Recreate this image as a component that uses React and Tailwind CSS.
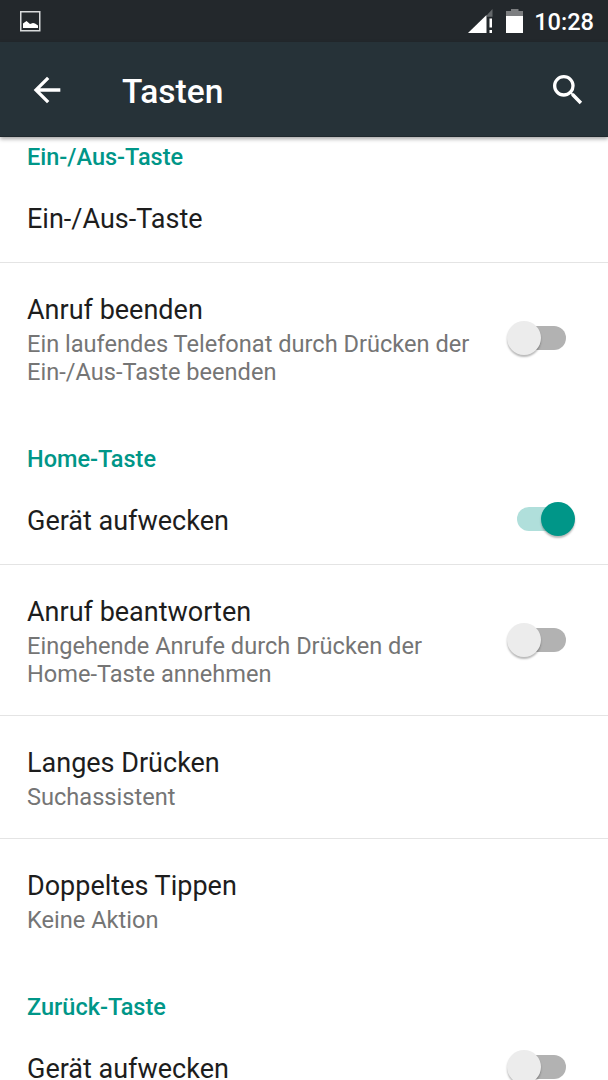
const sections = [
  {
    title: 'Ein-/Aus-Taste',
    items: [
      { title: 'Ein-/Aus-Taste' },
      {
        title: 'Anruf beenden',
        summary: ['Ein laufendes Telefonat durch Drücken der', 'Ein-/Aus-Taste beenden'],
        checked: false,
      },
    ],
  },
  {
    title: 'Home-Taste',
    items: [
      { title: 'Gerät aufwecken', checked: true },
      {
        title: 'Anruf beantworten',
        summary: ['Eingehende Anrufe durch Drücken der', 'Home-Taste annehmen'],
        checked: false,
      },
      { title: 'Langes Drücken', summary: ['Suchassistent'] },
      { title: 'Doppeltes Tippen', summary: ['Keine Aktion'] },
    ],
  },
  {
    title: 'Zurück-Taste',
    items: [{ title: 'Gerät aufwecken', checked: false }],
  },
];

function StatusBar() {
  return (
    <div className="flex h-[42px] shrink-0 items-center justify-between bg-[#23282c] pl-5 pr-[14px] text-white">
      <svg width="21" height="21" viewBox="0 0 21 21" className="shrink-0">
        <rect x="0.75" y="0.75" width="19" height="19" fill="none" stroke="#d8dadb" strokeWidth="1.5" />
        <path d="M3 17v-4.500l3.500-2.500 3.500 3 3-1 2 .500 3 2V17z" fill="#fff" />
      </svg>
      <div className="flex items-center">
        <svg width="26" height="26" viewBox="0 0 26 26" className="mr-[12px]">
          <path d="M19 7l5.500-6v7.700h-5.500z" fill="#64686b" />
          <path d="M0 25L18.500 7v18z" fill="#fff" />
          <path d="M21.500 10.500h2.500v9h-2.500zM21.500 22h2.500v3h-2.500z" fill="#fff" />
        </svg>
        <svg width="17" height="26" viewBox="0 0 17 26" className="mr-[11px]">
          <path d="M0 8V3h5V1h7.500v2H17v5z" fill="#7c7e80" />
          <path d="M0 8h17v17H0z" fill="#fff" />
        </svg>
        <span className="pt-px text-[23.6px] leading-[28px] font-medium">10:28</span>
      </div>
    </div>
  );
}

function Toolbar() {
  return (
    <header className="relative z-10 flex h-[95px] shrink-0 items-center border-b border-[#1f282d] bg-[#263238] text-white shadow-[0_2px_4px_rgba(0,0,0,0.35)]">
      <button className="ml-[27px] h-10 w-10 pt-px">
        <svg width="40" height="40" viewBox="0 0 24 24" fill="currentColor">
          <path d="M20 11H7.830l5.590-5.590L12 4l-8 8 8 8 1.410-1.410L7.830 13H20v-2z" />
        </svg>
      </button>
      <h1 className="ml-[55px] flex-1 pt-[6px] text-[33.5px] leading-10 font-medium">Tasten</h1>
      <button className="mr-[20px] h-10 w-10 pt-px">
        <svg width="40" height="40" viewBox="0 0 24 24" fill="currentColor">
          <path d="M15.500 14h-.790l-.280-.270A6.471 6.471 0 0 0 16 9.500 6.500 6.500 0 1 0 9.500 16c1.610 0 3.090-.590 4.230-1.570l.270.280v.790l5 4.990L20.490 19l-4.990-5zm-6 0C7.010 14 5 11.990 5 9.500S7.010 5 9.500 5 14 7.010 14 9.500 11.990 14 9.500 14z" />
        </svg>
      </button>
    </header>
  );
}

function Switch({ checked }) {
  return (
    <div className="relative h-[34px] w-[68px] shrink-0">
      <div
        className={
          checked
            ? 'absolute top-[5px] left-[10px] h-6 w-[49px] rounded-full bg-[#b0dfdb]'
            : 'absolute top-[5px] left-[10px] h-6 w-[49px] rounded-full bg-[#b2b2b2]'
        }
      />
      <div
        className={
          checked
            ? 'absolute top-0 right-0 size-[34px] rounded-full bg-[#009688] shadow-[0_2px_2px_rgba(0,0,0,0.28)]'
            : 'absolute top-0 left-0 size-[34px] rounded-full bg-[#ececec] shadow-[0_2px_2px_rgba(0,0,0,0.28)]'
        }
      />
    </div>
  );
}

function Preference({ title, summary, checked, divider }) {
  return (
    <div
      className={
        divider
          ? 'flex items-center border-b border-[#e4e4e4] pr-[33px] pl-[27px]'
          : 'flex items-center pr-[33px] pl-[27px]'
      }
    >
      <div className={summary ? 'flex-1 pt-[31px] pb-[27px]' : 'flex-1 pt-7 pb-[27px]'}>
        <div className="text-[27px] leading-8 whitespace-nowrap text-[#1d1d1d]">{title}</div>
        {summary && (
          <div className="mt-1 text-[23.6px] leading-7 whitespace-nowrap text-[#757575]">
            {summary.map((line) => (
              <div key={line}>{line}</div>
            ))}
          </div>
        )}
      </div>
      {checked !== undefined && (
        <div className={summary ? '' : 'pb-[3px]'}>
          <Switch checked={checked} />
        </div>
      )}
    </div>
  );
}

export default function App() {
  return (
    <div className="flex h-[1080px] w-[608px] flex-col overflow-hidden bg-white font-[Roboto,sans-serif]">
      <StatusBar />
      <Toolbar />
      {/* the list is scrolled a little way under the toolbar */}
      <main className="-mt-[25px] shrink-0">
        {sections.map((section) => (
          <section key={section.title}>
            <h2 className="h-[63px] pt-[31px] pl-[27px] text-[23.5px] leading-7 font-medium text-[#009688]">
              {section.title}
            </h2>
            {section.items.map((item, i) => {
              const last = i === section.items.length - 1;
              return (
                <div key={item.title} className={last ? 'pb-px' : ''}>
                  <Preference {...item} divider={!last} />
                </div>
              );
            })}
          </section>
        ))}
      </main>
    </div>
  );
}
